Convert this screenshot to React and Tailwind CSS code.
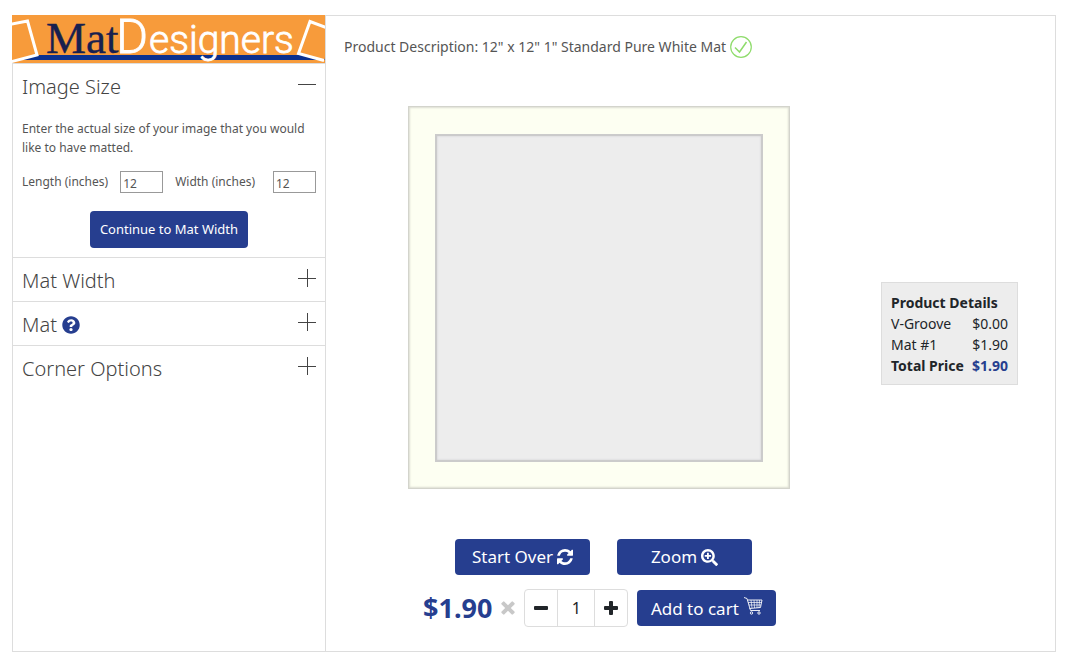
import React, { useState } from 'react';
import { FaQuestionCircle, FaSearchPlus } from 'react-icons/fa';

const SECTIONS = [
  { id: 'width', title: 'Mat Width' },
  { id: 'mat', title: 'Mat', help: true },
  { id: 'corner', title: 'Corner Options' }
];

const DETAILS = [
  { label: 'V-Groove', price: '$0.00' },
  { label: 'Mat #1', price: '$1.90' }
];

const Logo = () => (
  <svg viewBox="0 0 313 48" className="-mt-px -ml-px block w-[313px] overflow-visible" role="img" aria-label="MatDesigners">
    <defs>
      <clipPath id="banner">
        <rect width="313" height="48" />
      </clipPath>
    </defs>
    <g clipPath="url(#banner)">
      <rect width="313" height="48" fill="#f79b3b" />
      <rect y="40" width="313" height="5" fill="#0b318f" />
      <path d="M-8 10.500L15.500 6L25 40L-8 48.500" fill="#f79b3b" stroke="#fff" strokeWidth="3" />
      <path d="M321 15L298 6.500L286.500 38.500L312 45.500" fill="#f79b3b" stroke="#fff" strokeWidth="3" />
      <path d="M312 43.500L321 12V48z" fill="#f79b3b" />
    </g>
    <text x="34" y="38" fontSize="45" fill="#17204f" stroke="#17204f" strokeWidth="0.4" fontFamily="'Liberation Serif', serif">Mat</text>
    <text x="104" y="38" fontSize="49" fontWeight="300" fill="#fff" stroke="#fff" strokeWidth="0.8" fontFamily="Roboto, sans-serif">D</text>
    <text x="137" y="38" fontSize="39" fontWeight="300" fill="#fff" stroke="#fff" strokeWidth="0.8" fontFamily="Roboto, sans-serif">esigners</text>
  </svg>
);

const RefreshIcon = () => (
  <svg viewBox="0 0 1536 1536" className="h-4 w-4" fill="currentColor" aria-hidden="true">
    <path d="M1511 928q0 5-1 7-64 268-268 434.500T764 1536q-146 0-282.500-55T238 1324l-129 129q-19 19-45 19t-45-19-19-45V960q0-26 19-45t45-19h448q26 0 45 19t19 45-19 45l-137 137q71 66 161 102t187 36q134 0 250-65t186-179q11-17 53-117 8-23 30-23h192q13 0 22.500 9.500t9.500 22.500zm25-800v448q0 26-19 45t-45 19h-448q-26 0-45-19t-19-45 19-45l138-138Q969 256 768 256q-134 0-250 65T332 500q-11 17-53 117-8 23-30 23H50q-13 0-22.500-9.500T18 608v-7q65-268 270-434.500T768 0q146 0 284 55.500T1297 212l130-129q19-19 45-19t45 19 19 45z" />
  </svg>
);

const CartIcon = () => (
  <svg viewBox="0 0 20 20" className="mb-1 h-5 w-5" fill="none" stroke="currentColor" strokeWidth="0.9" aria-hidden="true">
    <path d="M1 1.500l3 1L7.500 14.500H17M4.500 4H19L17.500 11.500L6.500 12.500" />
    <path d="M5 6.500h13.500M5.800 9h12.200M8 4l1 8M11 4l.5 8M14 4v8M16.500 4l-.5 8" strokeWidth="0.7" />
    <circle cx="8.500" cy="17" r="1.200" />
    <circle cx="16" cy="17" r="1.200" />
  </svg>
);

const MinusIcon = () => (
  <svg viewBox="0 0 14 14" className="h-3.5 w-3.5" fill="currentColor" aria-hidden="true">
    <rect y="5" width="14" height="4" rx="1" />
  </svg>
);

const PlusIcon = () => (
  <svg viewBox="0 0 14 14" className="h-3.5 w-3.5" fill="currentColor" aria-hidden="true">
    <rect y="5" width="14" height="4" rx="1" />
    <rect x="5" width="4" height="14" rx="1" />
  </svg>
);

const TimesIcon = () => (
  <svg viewBox="0 0 14 14" className="h-3.5 w-3.5 text-[#c8c8c8]" fill="currentColor" aria-hidden="true">
    <g transform="rotate(45 7 7)">
      <rect x="-1" y="5" width="16" height="4" rx="1" />
      <rect x="5" y="-1" width="4" height="16" rx="1" />
    </g>
  </svg>
);

// Thin plus / minus marker on the right of each section header
const ToggleMark = ({ open }) => (
  <svg viewBox="0 0 18 18" className="mb-1 h-[18px] w-[18px]" stroke="#444" shapeRendering="crispEdges" aria-hidden="true">
    <path d={open ? 'M0 9.500h18' : 'M0 9.500h18M9.500 0v18'} />
  </svg>
);

const SectionHeader = ({ title, open, help, onClick }) => (
  <button
    type="button"
    onClick={onClick}
    aria-expanded={open}
    className="flex h-[43px] w-full items-center justify-between px-[9px] text-left"
  >
    <span className="flex items-center gap-[5px] pt-0.5 text-xl font-light text-[#444]">
      {title}
      {help && <FaQuestionCircle className="h-[18px] w-[18px] text-[#263e8f]" />}
    </span>
    <ToggleMark open={open} />
  </button>
);

const SizeInput = ({ id, label, value, onChange }) => (
  <div className="flex items-center justify-between gap-3 last:flex-1">
    <label htmlFor={id} className="text-xs">{label}</label>
    <input
      id={id}
      type="text"
      value={value}
      onChange={(e) => onChange(e.target.value)}
      className="h-[22px] w-[43px] border border-[#999] px-0.5 pt-0.5 text-xs"
    />
  </div>
);

const App = () => {
  const [length, setLength] = useState('12');
  const [width, setWidth] = useState('12');
  const [quantity, setQuantity] = useState(1);
  const [imageOpen, setImageOpen] = useState(true);

  return (
    <div className="px-3 py-[15px] pr-[15px] font-['Noto_Sans',sans-serif] text-[#555]">
      <div className="flex min-h-[637px] border border-[#ddd]">
        {/* Options */}
        <aside className="w-[313px] shrink-0 border-r border-[#ddd]">
          <Logo />
          <div className="border-y border-[#ddd]">
            <SectionHeader title="Image Size" open={imageOpen} onClick={() => setImageOpen(!imageOpen)} />
            {imageOpen && (
              <div className="px-[9px] pt-3 pb-[9px]">
                <p className="text-xs leading-[19px]">
                  Enter the actual size of your image that you would like to have matted.
                </p>
                <div className="mt-3.5 flex gap-3">
                  <SizeInput id="length" label="Length (inches)" value={length} onChange={setLength} />
                  <SizeInput id="width" label="Width (inches)" value={width} onChange={setWidth} />
                </div>
                <button
                  type="button"
                  className="mx-auto mt-[18px] block h-[37px] rounded-sm bg-[#263e8f] px-2.5 text-[13px] text-white"
                >
                  Continue to Mat Width
                </button>
              </div>
            )}
          </div>
          {SECTIONS.map((section) => (
            <div key={section.id} className="border-b border-[#ddd] last:border-b-0">
              <SectionHeader title={section.title} help={section.help} open={false} />
            </div>
          ))}
        </aside>

        {/* Preview */}
        <main className="flex-1">
          <div className="flex h-[62px] items-center gap-1 pl-[18px] text-sm">
            <p>Product Description: 12" x 12" 1" Standard Pure White Mat</p>
            <svg viewBox="0 0 22 22" className="h-[22px] w-[22px]" fill="none" stroke="#8fdc6c" aria-hidden="true">
              <circle cx="11" cy="11" r="10.300" strokeWidth="1.200" />
              <path d="M5 11.500l4.500 4.500L16.500 6" strokeWidth="1.500" />
            </svg>
          </div>

          <div className="flex items-center pt-7">
            <div className="flex flex-1 justify-center pr-2.5">
              <div className="h-[383px] w-[382px] border border-[#d3d4cc] bg-[#fdfff2] p-[26px] pt-[27px] shadow-[inset_0_0_2px_1px_#dcddd2]">
                <div className="h-full border-2 border-[#cbcbcb] bg-[#ededed] shadow-[inset_0_0_2px_#c8c8cc]" />
              </div>
            </div>
            <div className="mt-[72px] mr-[37px] w-[137px] border border-[#ddd] bg-[#ededed] px-[9px] pt-[9px] pb-2 text-sm text-[#212529]">
              <table className="w-full leading-[21px]">
                <caption className="text-left font-bold">Product Details</caption>
                <tbody>
                  {DETAILS.map((row) => (
                    <tr key={row.label}>
                      <td>{row.label}</td>
                      <td className="text-right">{row.price}</td>
                    </tr>
                  ))}
                  <tr className="font-bold">
                    <td>Total Price</td>
                    <td className="text-right text-[#263e8f]">$1.90</td>
                  </tr>
                </tbody>
              </table>
            </div>
          </div>

          <div className="mt-[50px] flex gap-[27px] pl-[129px] text-[17px] text-white">
            <button type="button" className="flex h-9 w-[135px] items-center justify-center gap-1 rounded-sm bg-[#263e8f]">
              Start Over <RefreshIcon />
            </button>
            <button type="button" className="flex h-9 w-[135px] items-center justify-center gap-1 rounded-sm bg-[#263e8f]">
              Zoom <FaSearchPlus className="h-[17px] w-[17px]" />
            </button>
          </div>

          <div className="mt-[13px] flex items-center pl-[97px]">
            <span className="text-[27px] font-bold text-[#263e8f]">$1.90</span>
            <span className="mx-[9px]">
              <TimesIcon />
            </span>
            <div className="flex h-[38px] items-center rounded-sm border border-[#ddd] text-[#212529]">
              <button
                type="button"
                aria-label="Decrease quantity"
                onClick={() => setQuantity(Math.max(1, quantity - 1))}
                className="flex h-full w-8 items-center justify-center"
              >
                <MinusIcon />
              </button>
              <input
                type="text"
                aria-label="Quantity"
                value={quantity}
                onChange={(e) => setQuantity(Number(e.target.value) || 1)}
                className="h-full w-[38px] border-x border-[#ddd] text-center text-base"
              />
              <button
                type="button"
                aria-label="Increase quantity"
                onClick={() => setQuantity(quantity + 1)}
                className="flex h-full w-8 items-center justify-center"
              >
                <PlusIcon />
              </button>
            </div>
            <button type="button" className="ml-[9px] flex h-9 w-[139px] items-center justify-center gap-1 rounded-sm bg-[#263e8f] text-[17px] text-white">
              Add to cart <CartIcon />
            </button>
          </div>
        </main>
      </div>
    </div>
  );
};

export default App;
